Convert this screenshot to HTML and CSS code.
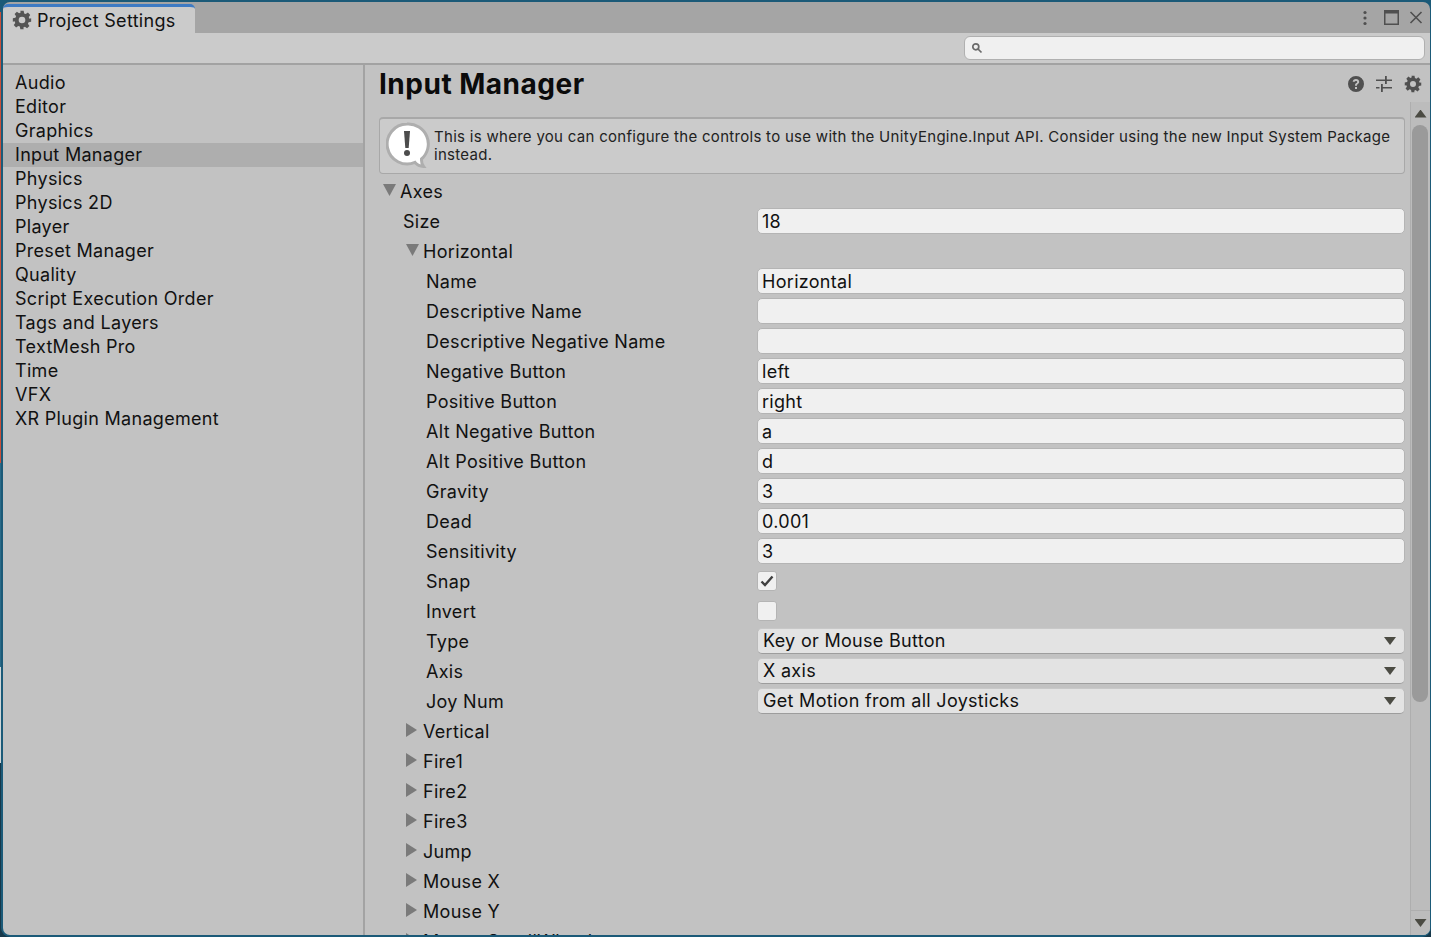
FILE: index.html
```html
<!DOCTYPE html>
<html>

<head>
  <meta http-equiv="Content-Type" content="text/html; charset=UTF-8" />
  <title>Project Settings</title>
  <link rel="stylesheet" href="styles.css">
</head>

<body>
  <div class="window">
    <div class="tabstrip">
      <div class="tab">
        <svg class="gear tab-gear" viewBox="0 0 24 24"><path fill-rule="evenodd" d="M10 1h4l.6 3.100 1.900.8 2.600-1.800 2.800 2.800-1.800 2.600.8 1.900L23 10v4l-3.100.6-.8 1.900 1.800 2.600-2.800 2.800-2.600-1.800-1.900.8L14 23h-4l-.6-3.100-1.900-.8-2.600 1.800-2.800-2.800 1.800-2.600-.8-1.900L1 14v-4l3.100-.6.8-1.900-1.800-2.600 2.800-2.800 2.600 1.800 1.900-.8zM12 8a4 4 0 1 0 0 8 4 4 0 0 0 0-8z"/></svg>
        <span>Project Settings</span>
      </div>
      <div class="window-controls">
        <svg class="ctl-dots" viewBox="0 0 6 16"><circle cx="3" cy="2.500" r="1.600"/><circle cx="3" cy="8" r="1.600"/><circle cx="3" cy="13.500" r="1.600"/></svg>
        <svg class="ctl-max" viewBox="0 0 15 15"><path fill-rule="evenodd" d="M0 0h15v15H0zM1.500 3.500v10h12v-10z"/></svg>
        <svg class="ctl-close" viewBox="0 0 13 13"><path d="M1 1l11 11M12 1L1 12"/></svg>
      </div>
    </div>

    <div class="toolbar">
      <div class="search">
        <svg viewBox="0 0 12 12"><circle cx="4.800" cy="4.800" r="3"/><path d="M7 7l3.500 3.500"/></svg>
      </div>
    </div>

    <div class="panes">
      <div class="sidebar">
        <div class="side-item">Audio</div>
        <div class="side-item">Editor</div>
        <div class="side-item">Graphics</div>
        <div class="side-item selected">Input Manager</div>
        <div class="side-item">Physics</div>
        <div class="side-item">Physics 2D</div>
        <div class="side-item">Player</div>
        <div class="side-item">Preset Manager</div>
        <div class="side-item">Quality</div>
        <div class="side-item">Script Execution Order</div>
        <div class="side-item">Tags and Layers</div>
        <div class="side-item">TextMesh Pro</div>
        <div class="side-item">Time</div>
        <div class="side-item">VFX</div>
        <div class="side-item">XR Plugin Management</div>
      </div>

      <div class="content">
        <div class="title-row">
          <h1>Input Manager</h1>
          <div class="title-icons">
            <svg class="ico-help" viewBox="0 0 16 16"><path fill-rule="evenodd" d="M8 0a8 8 0 1 1 0 16A8 8 0 0 1 8 0zM7 11v2h2v-2zM8 3C6 3 4.800 4.100 4.700 5.800h2C6.800 5.200 7.200 4.900 8 4.900c.7 0 1.200.4 1.200 1 0 .5-.3.8-.9 1.200C7.400 7.700 7 8.300 7 9.800h2c0-.9.200-1.200.9-1.700.8-.6 1.300-1.200 1.300-2.300C11.200 4.100 9.900 3 8 3z"/></svg>
            <svg class="ico-sliders" viewBox="0 0 16 16"><path d="M0 3.500h9V0h1.800v3.500H16V5h-5.200v3H9V5H0zM0 11h3.500v1.500H0zM5 8h1.800v3H16v1.500H6.800V16H5z"/></svg>
            <svg class="gear ico-gear" viewBox="0 0 24 24"><path fill-rule="evenodd" d="M10 1h4l.6 3.100 1.900.8 2.600-1.800 2.800 2.800-1.800 2.600.8 1.900L23 10v4l-3.100.6-.8 1.900 1.800 2.600-2.800 2.800-2.600-1.800-1.900.8L14 23h-4l-.6-3.100-1.900-.8-2.600 1.800-2.800-2.800 1.800-2.600-.8-1.900L1 14v-4l3.100-.6.8-1.900-1.800-2.600 2.800-2.800 2.600 1.800 1.900-.8zM12 8a4 4 0 1 0 0 8 4 4 0 0 0 0-8z"/></svg>
          </div>
        </div>

        <div class="scroll-area">
          <div class="props">
            <div class="helpbox">
              <svg class="help-bubble" viewBox="0 0 44 48">
                <path d="M21 2a20 20 0 1 0 8 38.400c2 2.400 5 4 8.500 4.100-1.500-2-2.200-4.500-2-7.500A20 20 0 0 0 21 2z" fill="#fff" stroke="#aeaeae" stroke-width="3"/>
                <path d="M18 9h6l-1.300 17h-3.400z" fill="#4c4c4c"/>
                <circle cx="21" cy="31" r="3" fill="#4c4c4c"/>
              </svg>
              <p>This is where you can configure the controls to use with the UnityEngine.Input API. Consider using the new Input System Package instead.</p>
            </div>

            <div class="row lv0"><i class="arrow down"></i><span>Axes</span></div>
            <div class="row lv0b"><span>Size</span><div class="field">18</div></div>
            <div class="row lv1"><i class="arrow down"></i><span>Horizontal</span></div>
            <div class="row lv2"><span>Name</span><div class="field">Horizontal</div></div>
            <div class="row lv2"><span>Descriptive Name</span><div class="field"></div></div>
            <div class="row lv2"><span>Descriptive Negative Name</span><div class="field"></div></div>
            <div class="row lv2"><span>Negative Button</span><div class="field">left</div></div>
            <div class="row lv2"><span>Positive Button</span><div class="field">right</div></div>
            <div class="row lv2"><span>Alt Negative Button</span><div class="field">a</div></div>
            <div class="row lv2"><span>Alt Positive Button</span><div class="field">d</div></div>
            <div class="row lv2"><span>Gravity</span><div class="field">3</div></div>
            <div class="row lv2"><span>Dead</span><div class="field">0.001</div></div>
            <div class="row lv2"><span>Sensitivity</span><div class="field">3</div></div>
            <div class="row lv2"><span>Snap</span><div class="check"><svg viewBox="0 0 14 12"><path d="M1.500 6.500l3.500 3.500 7.500-8.500"/></svg></div></div>
            <div class="row lv2"><span>Invert</span><div class="check"></div></div>
            <div class="row lv2"><span>Type</span><div class="select">Key or Mouse Button<i class="caret"></i></div></div>
            <div class="row lv2"><span>Axis</span><div class="select">X axis<i class="caret"></i></div></div>
            <div class="row lv2"><span>Joy Num</span><div class="select">Get Motion from all Joysticks<i class="caret"></i></div></div>
            <div class="row lv1"><i class="arrow"></i><span>Vertical</span></div>
            <div class="row lv1"><i class="arrow"></i><span>Fire1</span></div>
            <div class="row lv1"><i class="arrow"></i><span>Fire2</span></div>
            <div class="row lv1"><i class="arrow"></i><span>Fire3</span></div>
            <div class="row lv1"><i class="arrow"></i><span>Jump</span></div>
            <div class="row lv1"><i class="arrow"></i><span>Mouse X</span></div>
            <div class="row lv1"><i class="arrow"></i><span>Mouse Y</span></div>
            <div class="row lv1"><i class="arrow"></i><span>Mouse ScrollWheel</span></div>
          </div>

          <div class="scrollbar">
            <div class="sb-btn"><i class="sb-up"></i></div>
            <div class="sb-track"><div class="sb-thumb"></div></div>
            <div class="sb-btn sb-btn-bottom"><i class="sb-down"></i></div>
          </div>
        </div>
      </div>
    </div>
  </div>
</body>

</html>
```

FILE: styles.css
```css
html,
body {
  margin: 0;
  height: 100%;
  overflow: hidden;
}

/* what shows of the desktop behind the window, down its left edge */
body {
  background: linear-gradient(to bottom, #1b5a78 0, #1b5a78 12px, #c8503a 12px, #c8503a 463px, #2a6a88 463px, #2a6a88 667px, #cfd6d8 667px, #cfd6d8 763px, #17384a 763px);
}

* {
  box-sizing: border-box;
}

.window {
  display: flex;
  flex-direction: column;
  width: 1430px;
  height: 937px;
  margin-left: 1px;
  padding: 2px 1px 2px 2px;
  border-radius: 9px;
  background: #1b5a78;
  font-family: Inter, "Noto Sans", sans-serif;
  font-size: 18px;
  letter-spacing: 0.3px;
  color: #111;
}

/* tab strip */
.tabstrip {
  display: flex;
  justify-content: space-between;
  flex: none;
  height: 31px;
  background: #a5a5a5;
  border-radius: 7px 7px 0 0;
}

.tab {
  display: flex;
  align-items: center;
  gap: 5px;
  width: 192px;
  height: 29px;
  margin-top: 2px;
  padding: 0 0 0 9px;
  background: #cbcbcb;
  border-top: 3px solid #3e7bc4;
  border-radius: 5px 5px 0 0;
}

.gear {
  fill: #555;
}

.tab-gear {
  width: 20px;
  height: 20px;
}

.window-controls {
  display: flex;
  align-items: center;
  padding: 0 7px 0 0;
}

.window-controls svg {
  fill: #4f4f4f;
}

.ctl-dots {
  width: 6px;
  height: 16px;
  margin-right: 16px;
}

.ctl-max {
  width: 15px;
  height: 15px;
  margin-right: 10px;
}

.ctl-close {
  width: 14px;
  height: 13px;
  fill: none !important;
  stroke: #4f4f4f;
  stroke-width: 1.6;
}

/* search bar */
.toolbar {
  display: flex;
  justify-content: flex-end;
  align-items: center;
  flex: none;
  height: 32px;
  padding: 0 5px 1px 0;
  background: #cbcbcb;
  border-bottom: 2px solid #a2a2a2;
}

.search {
  display: flex;
  align-items: center;
  width: 461px;
  height: 24px;
  padding-left: 6px;
  background: #f0f0f0;
  border: 1px solid #b0b0b0;
  border-radius: 6px;
}

.search svg {
  width: 12px;
  height: 12px;
  fill: none;
  stroke: #6b6b6b;
  stroke-width: 1.7;
}

.panes {
  display: flex;
  flex: 1;
  min-height: 0;
  background: #c2c2c2;
  border-radius: 0 0 7px 7px;
  overflow: hidden;
}

.sidebar {
  flex: none;
  width: 362px;
  padding-top: 6px;
  border-right: 2px solid #a3a3a3;
}

.side-item {
  height: 24px;
  line-height: 24px;
  padding-left: 12px;
}

.side-item.selected {
  background: #aeaeae;
}

.content {
  display: flex;
  flex-direction: column;
  flex: 1;
  min-width: 0;
  overflow: hidden;
}

.title-row {
  display: flex;
  justify-content: space-between;
  align-items: center;
  flex: none;
  height: 37px;
  padding: 0 8px 0 14px;
}

h1 {
  margin: 0;
  font-size: 28px;
  font-weight: 700;
  letter-spacing: 0.5px;
  color: #0b0b0b;
}

.title-icons {
  display: flex;
  align-items: center;
  gap: 12px;
}

.title-icons svg {
  width: 16px;
  height: 16px;
  fill: #505050;
}

.title-icons .ico-gear {
  width: 18px;
  height: 18px;
}

.scroll-area {
  display: flex;
  flex: 1;
  min-height: 0;
}

.props {
  flex: none;
  width: 1040px;
  padding: 15px 0 0 14px;
  overflow: hidden;
}

.helpbox {
  display: flex;
  align-items: center;
  gap: 4px;
  height: 57px;
  margin-bottom: 2px;
  padding: 0 10px 0 6px;
  background: #cbcbcb;
  border: 1px solid #a8a8a8;
  border-top-width: 2px;
  border-radius: 4px;
}

.help-bubble {
  flex: none;
  width: 44px;
  height: 48px;
}

.helpbox p {
  margin: 0;
  font-size: 15px;
  line-height: 18px;
  letter-spacing: 0.29px;
  color: #222;
}

/* property rows */
.row {
  display: flex;
  align-items: center;
  height: 30px;
  white-space: nowrap;
}

.lv0 {
  padding-left: 4px;
}

.lv0b {
  padding-left: 24px;
}

.lv1 {
  padding-left: 27px;
}

.lv2 {
  padding-left: 47px;
}

.row > span {
  flex: 1;
}

.arrow {
  flex: none;
  width: 11px;
  height: 14px;
  margin: -2px 6px 0 0;
  background: #7a7a7a;
  clip-path: polygon(0 0, 100% 50%, 0 100%);
}

.arrow.down {
  width: 13px;
  height: 12px;
  margin: -2px 4px 0 0;
  clip-path: polygon(0 0, 100% 0, 50% 100%);
}

.field,
.select {
  flex: none;
  width: 648px;
  height: 26px;
  line-height: 26px;
  padding-left: 4px;
  background: #f0f0f0;
  border: 1px solid #b4b4b4;
  border-radius: 5px;
}

.select {
  display: flex;
  justify-content: space-between;
  align-items: center;
  padding: 0 8px 0 5px;
  background: #e3e3e3;
  border-color: #c8c8c8 #bbb #9d9d9d;
}

.caret {
  width: 12px;
  height: 8px;
  background: #4b4b43;
  clip-path: polygon(0 0, 100% 0, 50% 100%);
}

.check {
  display: flex;
  align-items: center;
  justify-content: center;
  flex: none;
  width: 20px;
  height: 20px;
  margin-right: 628px;
  background: #f0f0f0;
  border: 1px solid #b4b4b4;
  border-radius: 3px;
}

.check svg {
  width: 14px;
  height: 12px;
  fill: none;
  stroke: #3f3f3f;
  stroke-width: 2.4;
}

/* scrollbar */
.scrollbar {
  display: flex;
  flex-direction: column;
  flex: none;
  width: 20px;
  margin-left: 5px;
  background: #bcbcbc;
  border-left: 1px solid #aeaeae;
}

.sb-btn {
  display: flex;
  align-items: center;
  justify-content: center;
  flex: none;
  height: 23px;
}

.sb-btn-bottom {
  height: 25px;
  border-top: 1px solid #aeaeae;
}

.sb-up,
.sb-down {
  width: 12px;
  height: 8px;
  background: #4b4b43;
}

.sb-up {
  clip-path: polygon(50% 0, 100% 100%, 0 100%);
}

.sb-down {
  clip-path: polygon(0 0, 100% 0, 50% 100%);
}

.sb-track {
  flex: 1;
  padding: 0 2px 0 1px;
}

.sb-thumb {
  height: 577px;
  background: #9a9a9a;
  border-radius: 8px;
}
```
